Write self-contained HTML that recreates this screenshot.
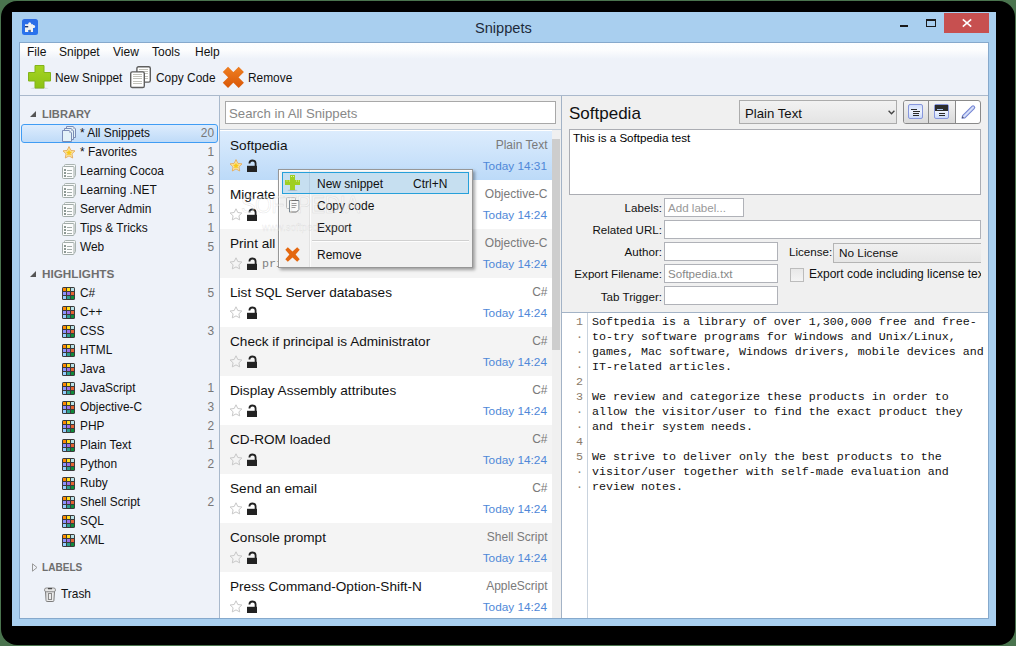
<!DOCTYPE html><html><head><meta charset="utf-8"><style>
*{margin:0;padding:0;box-sizing:border-box}
html,body{width:1016px;height:646px;overflow:hidden;background:#4a744e;font-family:"Liberation Sans",sans-serif;color:#111}
.a{position:absolute}
.t{position:absolute;white-space:nowrap;line-height:16px}
svg{position:absolute;overflow:visible}
#shadow{left:1px;top:1px;width:1014px;height:644px;background:#000;border-radius:16px}
#frame{left:12px;top:12px;width:984px;height:614px;background:#a9cfef}
#client{left:19px;top:42px;width:970px;height:577px;border:1px solid #86a9cc;background:#eef2f9}
#menubar{left:20px;top:43px;width:968px;height:52px;background:linear-gradient(#fdfeff 0px,#fcfdfe 7px,#eef2f9 16px,#eef2f9 52px)}
.menu{font-size:12px;top:44px}
.tb{font-size:11.9px;top:70px}
.hdr{font-size:11.4px;font-weight:bold;color:#6e6e6e;left:42px}
.row{font-size:11.9px;left:80px}
.cnt{font-size:11.9px;color:#777;left:0;width:214px;text-align:right}
.ttl{font-size:13.6px;left:230px;color:#111}
.typ{font-size:12px;color:#7a7a7a;left:300px;width:247.5px;text-align:right}
.dt{font-size:11.8px;color:#4f88d8;left:300px;width:247px;text-align:right}
.lbl{font-size:11.6px;left:500px;width:162px;text-align:right;color:#111}
.inp{position:absolute;background:#fff;border:1px solid #b0b2b8}
.code{font-family:"Liberation Mono",monospace;font-size:11.67px;line-height:15px;color:#111;white-space:pre}
.ln{font-family:"Liberation Mono",monospace;font-size:11.67px;line-height:15px;color:#8a7a6a;white-space:pre;text-align:right}
.mi{font-size:12px;left:317px}
</style></head><body>
<div id="shadow" class="a"></div><div id="frame" class="a"></div>
<svg style="left:22px;top:19px" width="16" height="16" viewBox="0 0 16 16">
<defs><linearGradient id="gb" x1="0" y1="0" x2="0" y2="1"><stop offset="0" stop-color="#2c6ce6"/><stop offset="1" stop-color="#2a74ee"/></linearGradient></defs>
<rect x="0" y="0" width="16" height="16" rx="2.5" fill="url(#gb)"/>
<path d="M3 5.3h3.2v-0.6a1.5 1.5 0 1 1 3 0v0.6h1.8v0.6h0.6a1.6 1.6 0 1 1 0 3.2h-0.6v4h-3.6v-2.2h-1.2v2.2h-3.2z" fill="#f2f2f2"/>
<rect x="3" y="7" width="3.2" height="1.4" fill="#243a70"/>
<rect x="7.4" y="10.8" width="1.2" height="2.3" fill="#1e3466"/>
</svg>
<div class="t" style="left:475px;top:19px;font-size:14.6px;line-height:18px;color:#1d2a3a">Snippets</div>
<div class="a" style="left:900px;top:25px;width:8px;height:2px;background:#1a1a1a"></div>
<div class="a" style="left:926px;top:19px;width:10px;height:8px;border:1px solid #1a1a1a;border-top-width:2px"></div>
<div class="a" style="left:944px;top:13px;width:45px;height:20px;background:#c75050"></div>
<svg style="left:962px;top:19px" width="10" height="8" viewBox="0 0 10 8"><path d="M0.8 0.4L9.2 7.6M9.2 0.4L0.8 7.6" stroke="#fff" stroke-width="1.6"/></svg>
<div id="client" class="a"></div><div id="menubar" class="a"></div>
<div class="t menu" style="left:27px">File</div>
<div class="t menu" style="left:59px">Snippet</div>
<div class="t menu" style="left:113px">View</div>
<div class="t menu" style="left:152px">Tools</div>
<div class="t menu" style="left:195px">Help</div>
<svg style="left:28px;top:65px" width="23" height="24" viewBox="0 0 23 24">
<defs><linearGradient id="gp" x1="0" y1="0" x2="0" y2="1"><stop offset="0" stop-color="#a6d422"/><stop offset="1" stop-color="#8cc214"/></linearGradient></defs>
<ellipse cx="11.5" cy="23.2" rx="9" ry="0.8" fill="#000" opacity="0.12"/>
<path d="M7 0.5h9v7h6.5v8.5h-6.5v7h-9v-7h-6.5v-8.5h6.5z" fill="url(#gp)" stroke="#82b41a" stroke-width="1"/>
</svg>
<svg style="left:130px;top:66px" width="22" height="23" viewBox="0 0 22 23">
<rect x="6.9" y="0.7" width="13.4" height="15.4" rx="1.6" fill="#fff" stroke="#5e5e5e" stroke-width="1.4"/>
<path d="M9 3.5h9M9 5.5h9M9 7.5h9M9 10.5h9M9 12.5h9" stroke="#c2c2ba" stroke-width="1"/>
<rect x="0.7" y="5.9" width="13.6" height="15.6" rx="1.6" fill="#fff" stroke="#5e5e5e" stroke-width="1.4"/>
<path d="M3 8.5h9M3 10.5h9M3 12.5h9M3 15.5h9M3 17.5h9" stroke="#c2c2ba" stroke-width="1"/>
</svg>
<svg style="left:222px;top:66px" width="23" height="22" viewBox="0 0 23 22">
<defs><linearGradient id="gx" x1="0" y1="0" x2="0" y2="1"><stop offset="0" stop-color="#ec7a1e"/><stop offset="1" stop-color="#dc5c0a"/></linearGradient></defs><path d="M3.4 3.4L19.3 19.3M19.3 3.4L3.4 19.3" stroke="url(#gx)" stroke-width="7.4" stroke-linecap="butt"/>
</svg>
<div class="t tb" style="left:55px">New Snippet</div>
<div class="t tb" style="left:156px">Copy Code</div>
<div class="t tb" style="left:248px">Remove</div>
<div class="a" style="left:20px;top:95px;width:968px;height:1px;background:#aab9cc"></div>
<div class="a" style="left:20px;top:96px;width:199px;height:522px;background:#eef2f9"></div>
<div class="a" style="left:219px;top:96px;width:1px;height:522px;background:#a9b9cc"></div>
<svg style="left:29px;top:110px" width="8" height="8" viewBox="0 0 8 8"><path d="M7 1V7H1z" fill="#555"/></svg>
<div class="t hdr" style="top:106px;transform:scaleX(0.975);transform-origin:0 0">LIBRARY</div>
<div class="a" style="left:21px;top:124px;width:197px;height:19px;border:1px solid #3f9cf4;border-radius:3px;background:linear-gradient(#ddecfd,#bfdbf8)"></div>
<svg style="left:62px;top:125px" width="16" height="17" viewBox="0 0 16 17"><path d="M4.5 1.5h7l2 2v9h-9z" fill="#e4f2f8" stroke="#7a8cb6"/><path d="M11.5 1.5v2h2z" fill="#fff" stroke="#aab6d0"/><path d="M2.5 3.5h7l2 2v9h-9z" fill="#e4f2f8" stroke="#7a8cb6"/><path d="M9.5 3.5v2h2z" fill="#fff" stroke="#aab6d0"/><path d="M0.5 5.5h7l2 2v9h-9z" fill="#e4f2f8" stroke="#7a8cb6"/><path d="M7.5 5.5v2h2z" fill="#fff" stroke="#aab6d0"/></svg>
<div class="t row" style="top:125px">* All Snippets</div>
<div class="t cnt" style="top:125px">20</div>
<svg style="left:62px;top:146px" width="14" height="13" viewBox="0 0 14 13">
<path d="M7 0.6L8.8 4.4L13 4.9L9.9 7.8L10.7 12L7 9.9L3.3 12L4.1 7.8L1 4.9L5.2 4.4z" fill="#fde9a8" stroke="#e6b064" stroke-width="1" stroke-linejoin="round"/>
<path d="M7 3.2L7.9 5.5L10.3 5.8L8.5 7.4L9 9.6L7 8.4L5 9.6L5.5 7.4L3.7 5.8L6.1 5.5z" fill="#f8c81a"/>
</svg>
<div class="t row" style="top:144px">* Favorites</div>
<div class="t cnt" style="top:144px">1</div>
<svg style="left:62px;top:164px" width="15" height="15" viewBox="0 0 15 15">
<rect x="2.5" y="0.5" width="11" height="12" rx="1" fill="#f6f8f8" stroke="#a9b3b0"/>
<rect x="0.5" y="2.5" width="11.5" height="12" rx="1" fill="#fbfcfc" stroke="#a2aca9"/>
<path d="M2 6h2M2 9h2M2 12h2" stroke="#8c9894" stroke-width="1.8"/>
<path d="M5 6.5h5M5 9.5h5M5 12.5h5" stroke="#a3adaa" stroke-width="1.2"/>
</svg>
<div class="t row" style="top:163px">Learning Cocoa</div>
<div class="t cnt" style="top:163px">3</div>
<svg style="left:62px;top:183px" width="15" height="15" viewBox="0 0 15 15">
<rect x="2.5" y="0.5" width="11" height="12" rx="1" fill="#f6f8f8" stroke="#a9b3b0"/>
<rect x="0.5" y="2.5" width="11.5" height="12" rx="1" fill="#fbfcfc" stroke="#a2aca9"/>
<path d="M2 6h2M2 9h2M2 12h2" stroke="#8c9894" stroke-width="1.8"/>
<path d="M5 6.5h5M5 9.5h5M5 12.5h5" stroke="#a3adaa" stroke-width="1.2"/>
</svg>
<div class="t row" style="top:182px">Learning .NET</div>
<div class="t cnt" style="top:182px">5</div>
<svg style="left:62px;top:202px" width="15" height="15" viewBox="0 0 15 15">
<rect x="2.5" y="0.5" width="11" height="12" rx="1" fill="#f6f8f8" stroke="#a9b3b0"/>
<rect x="0.5" y="2.5" width="11.5" height="12" rx="1" fill="#fbfcfc" stroke="#a2aca9"/>
<path d="M2 6h2M2 9h2M2 12h2" stroke="#8c9894" stroke-width="1.8"/>
<path d="M5 6.5h5M5 9.5h5M5 12.5h5" stroke="#a3adaa" stroke-width="1.2"/>
</svg>
<div class="t row" style="top:201px">Server Admin</div>
<div class="t cnt" style="top:201px">1</div>
<svg style="left:62px;top:221px" width="15" height="15" viewBox="0 0 15 15">
<rect x="2.5" y="0.5" width="11" height="12" rx="1" fill="#f6f8f8" stroke="#a9b3b0"/>
<rect x="0.5" y="2.5" width="11.5" height="12" rx="1" fill="#fbfcfc" stroke="#a2aca9"/>
<path d="M2 6h2M2 9h2M2 12h2" stroke="#8c9894" stroke-width="1.8"/>
<path d="M5 6.5h5M5 9.5h5M5 12.5h5" stroke="#a3adaa" stroke-width="1.2"/>
</svg>
<div class="t row" style="top:220px">Tips &amp; Tricks</div>
<div class="t cnt" style="top:220px">1</div>
<svg style="left:62px;top:240px" width="15" height="15" viewBox="0 0 15 15">
<rect x="2.5" y="0.5" width="11" height="12" rx="1" fill="#f6f8f8" stroke="#a9b3b0"/>
<rect x="0.5" y="2.5" width="11.5" height="12" rx="1" fill="#fbfcfc" stroke="#a2aca9"/>
<path d="M2 6h2M2 9h2M2 12h2" stroke="#8c9894" stroke-width="1.8"/>
<path d="M5 6.5h5M5 9.5h5M5 12.5h5" stroke="#a3adaa" stroke-width="1.2"/>
</svg>
<div class="t row" style="top:239px">Web</div>
<div class="t cnt" style="top:239px">5</div>
<svg style="left:29px;top:270px" width="8" height="8" viewBox="0 0 8 8"><path d="M7 1V7H1z" fill="#555"/></svg>
<div class="t hdr" style="top:266px;transform:scaleX(1.03);transform-origin:0 0">HIGHLIGHTS</div>
<svg style="left:62px;top:287px" width="13" height="13" viewBox="0 0 13 13"><rect x="0" y="0" width="13" height="13" rx="1.5" fill="#3a3a3a"/><rect x="1" y="1" width="3" height="3" fill="#ff8a00"/><rect x="5" y="1" width="3" height="3" fill="#ffe01e"/><rect x="9" y="1" width="3" height="3" fill="#b8e2e8"/><rect x="1" y="5" width="3" height="3" fill="#8c92ff"/><rect x="5" y="5" width="3" height="3" fill="#9a6ee6"/><rect x="9" y="5" width="3" height="3" fill="#e66232"/><rect x="1" y="9" width="3" height="3" fill="#94ccff"/><rect x="5" y="9" width="3" height="3" fill="#2e9e8c"/><rect x="9" y="9" width="3" height="3" fill="#0e8a3a"/></svg>
<div class="t row" style="top:285px">C#</div>
<div class="t cnt" style="top:285px">5</div>
<svg style="left:62px;top:306px" width="13" height="13" viewBox="0 0 13 13"><rect x="0" y="0" width="13" height="13" rx="1.5" fill="#3a3a3a"/><rect x="1" y="1" width="3" height="3" fill="#ff8a00"/><rect x="5" y="1" width="3" height="3" fill="#ffe01e"/><rect x="9" y="1" width="3" height="3" fill="#b8e2e8"/><rect x="1" y="5" width="3" height="3" fill="#8c92ff"/><rect x="5" y="5" width="3" height="3" fill="#9a6ee6"/><rect x="9" y="5" width="3" height="3" fill="#e66232"/><rect x="1" y="9" width="3" height="3" fill="#94ccff"/><rect x="5" y="9" width="3" height="3" fill="#2e9e8c"/><rect x="9" y="9" width="3" height="3" fill="#0e8a3a"/></svg>
<div class="t row" style="top:304px">C++</div>
<svg style="left:62px;top:325px" width="13" height="13" viewBox="0 0 13 13"><rect x="0" y="0" width="13" height="13" rx="1.5" fill="#3a3a3a"/><rect x="1" y="1" width="3" height="3" fill="#ff8a00"/><rect x="5" y="1" width="3" height="3" fill="#ffe01e"/><rect x="9" y="1" width="3" height="3" fill="#b8e2e8"/><rect x="1" y="5" width="3" height="3" fill="#8c92ff"/><rect x="5" y="5" width="3" height="3" fill="#9a6ee6"/><rect x="9" y="5" width="3" height="3" fill="#e66232"/><rect x="1" y="9" width="3" height="3" fill="#94ccff"/><rect x="5" y="9" width="3" height="3" fill="#2e9e8c"/><rect x="9" y="9" width="3" height="3" fill="#0e8a3a"/></svg>
<div class="t row" style="top:323px">CSS</div>
<div class="t cnt" style="top:323px">3</div>
<svg style="left:62px;top:344px" width="13" height="13" viewBox="0 0 13 13"><rect x="0" y="0" width="13" height="13" rx="1.5" fill="#3a3a3a"/><rect x="1" y="1" width="3" height="3" fill="#ff8a00"/><rect x="5" y="1" width="3" height="3" fill="#ffe01e"/><rect x="9" y="1" width="3" height="3" fill="#b8e2e8"/><rect x="1" y="5" width="3" height="3" fill="#8c92ff"/><rect x="5" y="5" width="3" height="3" fill="#9a6ee6"/><rect x="9" y="5" width="3" height="3" fill="#e66232"/><rect x="1" y="9" width="3" height="3" fill="#94ccff"/><rect x="5" y="9" width="3" height="3" fill="#2e9e8c"/><rect x="9" y="9" width="3" height="3" fill="#0e8a3a"/></svg>
<div class="t row" style="top:342px">HTML</div>
<svg style="left:62px;top:363px" width="13" height="13" viewBox="0 0 13 13"><rect x="0" y="0" width="13" height="13" rx="1.5" fill="#3a3a3a"/><rect x="1" y="1" width="3" height="3" fill="#ff8a00"/><rect x="5" y="1" width="3" height="3" fill="#ffe01e"/><rect x="9" y="1" width="3" height="3" fill="#b8e2e8"/><rect x="1" y="5" width="3" height="3" fill="#8c92ff"/><rect x="5" y="5" width="3" height="3" fill="#9a6ee6"/><rect x="9" y="5" width="3" height="3" fill="#e66232"/><rect x="1" y="9" width="3" height="3" fill="#94ccff"/><rect x="5" y="9" width="3" height="3" fill="#2e9e8c"/><rect x="9" y="9" width="3" height="3" fill="#0e8a3a"/></svg>
<div class="t row" style="top:361px">Java</div>
<svg style="left:62px;top:382px" width="13" height="13" viewBox="0 0 13 13"><rect x="0" y="0" width="13" height="13" rx="1.5" fill="#3a3a3a"/><rect x="1" y="1" width="3" height="3" fill="#ff8a00"/><rect x="5" y="1" width="3" height="3" fill="#ffe01e"/><rect x="9" y="1" width="3" height="3" fill="#b8e2e8"/><rect x="1" y="5" width="3" height="3" fill="#8c92ff"/><rect x="5" y="5" width="3" height="3" fill="#9a6ee6"/><rect x="9" y="5" width="3" height="3" fill="#e66232"/><rect x="1" y="9" width="3" height="3" fill="#94ccff"/><rect x="5" y="9" width="3" height="3" fill="#2e9e8c"/><rect x="9" y="9" width="3" height="3" fill="#0e8a3a"/></svg>
<div class="t row" style="top:380px">JavaScript</div>
<div class="t cnt" style="top:380px">1</div>
<svg style="left:62px;top:401px" width="13" height="13" viewBox="0 0 13 13"><rect x="0" y="0" width="13" height="13" rx="1.5" fill="#3a3a3a"/><rect x="1" y="1" width="3" height="3" fill="#ff8a00"/><rect x="5" y="1" width="3" height="3" fill="#ffe01e"/><rect x="9" y="1" width="3" height="3" fill="#b8e2e8"/><rect x="1" y="5" width="3" height="3" fill="#8c92ff"/><rect x="5" y="5" width="3" height="3" fill="#9a6ee6"/><rect x="9" y="5" width="3" height="3" fill="#e66232"/><rect x="1" y="9" width="3" height="3" fill="#94ccff"/><rect x="5" y="9" width="3" height="3" fill="#2e9e8c"/><rect x="9" y="9" width="3" height="3" fill="#0e8a3a"/></svg>
<div class="t row" style="top:399px">Objective-C</div>
<div class="t cnt" style="top:399px">3</div>
<svg style="left:62px;top:420px" width="13" height="13" viewBox="0 0 13 13"><rect x="0" y="0" width="13" height="13" rx="1.5" fill="#3a3a3a"/><rect x="1" y="1" width="3" height="3" fill="#ff8a00"/><rect x="5" y="1" width="3" height="3" fill="#ffe01e"/><rect x="9" y="1" width="3" height="3" fill="#b8e2e8"/><rect x="1" y="5" width="3" height="3" fill="#8c92ff"/><rect x="5" y="5" width="3" height="3" fill="#9a6ee6"/><rect x="9" y="5" width="3" height="3" fill="#e66232"/><rect x="1" y="9" width="3" height="3" fill="#94ccff"/><rect x="5" y="9" width="3" height="3" fill="#2e9e8c"/><rect x="9" y="9" width="3" height="3" fill="#0e8a3a"/></svg>
<div class="t row" style="top:418px">PHP</div>
<div class="t cnt" style="top:418px">2</div>
<svg style="left:62px;top:439px" width="13" height="13" viewBox="0 0 13 13"><rect x="0" y="0" width="13" height="13" rx="1.5" fill="#3a3a3a"/><rect x="1" y="1" width="3" height="3" fill="#ff8a00"/><rect x="5" y="1" width="3" height="3" fill="#ffe01e"/><rect x="9" y="1" width="3" height="3" fill="#b8e2e8"/><rect x="1" y="5" width="3" height="3" fill="#8c92ff"/><rect x="5" y="5" width="3" height="3" fill="#9a6ee6"/><rect x="9" y="5" width="3" height="3" fill="#e66232"/><rect x="1" y="9" width="3" height="3" fill="#94ccff"/><rect x="5" y="9" width="3" height="3" fill="#2e9e8c"/><rect x="9" y="9" width="3" height="3" fill="#0e8a3a"/></svg>
<div class="t row" style="top:437px">Plain Text</div>
<div class="t cnt" style="top:437px">1</div>
<svg style="left:62px;top:458px" width="13" height="13" viewBox="0 0 13 13"><rect x="0" y="0" width="13" height="13" rx="1.5" fill="#3a3a3a"/><rect x="1" y="1" width="3" height="3" fill="#ff8a00"/><rect x="5" y="1" width="3" height="3" fill="#ffe01e"/><rect x="9" y="1" width="3" height="3" fill="#b8e2e8"/><rect x="1" y="5" width="3" height="3" fill="#8c92ff"/><rect x="5" y="5" width="3" height="3" fill="#9a6ee6"/><rect x="9" y="5" width="3" height="3" fill="#e66232"/><rect x="1" y="9" width="3" height="3" fill="#94ccff"/><rect x="5" y="9" width="3" height="3" fill="#2e9e8c"/><rect x="9" y="9" width="3" height="3" fill="#0e8a3a"/></svg>
<div class="t row" style="top:456px">Python</div>
<div class="t cnt" style="top:456px">2</div>
<svg style="left:62px;top:477px" width="13" height="13" viewBox="0 0 13 13"><rect x="0" y="0" width="13" height="13" rx="1.5" fill="#3a3a3a"/><rect x="1" y="1" width="3" height="3" fill="#ff8a00"/><rect x="5" y="1" width="3" height="3" fill="#ffe01e"/><rect x="9" y="1" width="3" height="3" fill="#b8e2e8"/><rect x="1" y="5" width="3" height="3" fill="#8c92ff"/><rect x="5" y="5" width="3" height="3" fill="#9a6ee6"/><rect x="9" y="5" width="3" height="3" fill="#e66232"/><rect x="1" y="9" width="3" height="3" fill="#94ccff"/><rect x="5" y="9" width="3" height="3" fill="#2e9e8c"/><rect x="9" y="9" width="3" height="3" fill="#0e8a3a"/></svg>
<div class="t row" style="top:475px">Ruby</div>
<svg style="left:62px;top:496px" width="13" height="13" viewBox="0 0 13 13"><rect x="0" y="0" width="13" height="13" rx="1.5" fill="#3a3a3a"/><rect x="1" y="1" width="3" height="3" fill="#ff8a00"/><rect x="5" y="1" width="3" height="3" fill="#ffe01e"/><rect x="9" y="1" width="3" height="3" fill="#b8e2e8"/><rect x="1" y="5" width="3" height="3" fill="#8c92ff"/><rect x="5" y="5" width="3" height="3" fill="#9a6ee6"/><rect x="9" y="5" width="3" height="3" fill="#e66232"/><rect x="1" y="9" width="3" height="3" fill="#94ccff"/><rect x="5" y="9" width="3" height="3" fill="#2e9e8c"/><rect x="9" y="9" width="3" height="3" fill="#0e8a3a"/></svg>
<div class="t row" style="top:494px">Shell Script</div>
<div class="t cnt" style="top:494px">2</div>
<svg style="left:62px;top:515px" width="13" height="13" viewBox="0 0 13 13"><rect x="0" y="0" width="13" height="13" rx="1.5" fill="#3a3a3a"/><rect x="1" y="1" width="3" height="3" fill="#ff8a00"/><rect x="5" y="1" width="3" height="3" fill="#ffe01e"/><rect x="9" y="1" width="3" height="3" fill="#b8e2e8"/><rect x="1" y="5" width="3" height="3" fill="#8c92ff"/><rect x="5" y="5" width="3" height="3" fill="#9a6ee6"/><rect x="9" y="5" width="3" height="3" fill="#e66232"/><rect x="1" y="9" width="3" height="3" fill="#94ccff"/><rect x="5" y="9" width="3" height="3" fill="#2e9e8c"/><rect x="9" y="9" width="3" height="3" fill="#0e8a3a"/></svg>
<div class="t row" style="top:513px">SQL</div>
<svg style="left:62px;top:534px" width="13" height="13" viewBox="0 0 13 13"><rect x="0" y="0" width="13" height="13" rx="1.5" fill="#3a3a3a"/><rect x="1" y="1" width="3" height="3" fill="#ff8a00"/><rect x="5" y="1" width="3" height="3" fill="#ffe01e"/><rect x="9" y="1" width="3" height="3" fill="#b8e2e8"/><rect x="1" y="5" width="3" height="3" fill="#8c92ff"/><rect x="5" y="5" width="3" height="3" fill="#9a6ee6"/><rect x="9" y="5" width="3" height="3" fill="#e66232"/><rect x="1" y="9" width="3" height="3" fill="#94ccff"/><rect x="5" y="9" width="3" height="3" fill="#2e9e8c"/><rect x="9" y="9" width="3" height="3" fill="#0e8a3a"/></svg>
<div class="t row" style="top:532px">XML</div>
<svg style="left:32px;top:563px" width="6" height="9" viewBox="0 0 6 9"><path d="M0.5 0.8L5 4.5L0.5 8.2z" fill="none" stroke="#999" stroke-width="1"/></svg>
<div class="t hdr" style="top:559px;transform:scaleX(0.885);transform-origin:0 0">LABELS</div>
<svg style="left:44px;top:587px" width="12" height="15" viewBox="0 0 12 15">
<path d="M1.5 4.5h9l-0.6 9a1 1 0 0 1 -1 1h-5.8a1 1 0 0 1 -1 -1z" fill="#ececec" stroke="#7c7c7c"/>
<path d="M2.8 5.5v8" stroke="#c8c8c8"/>
<rect x="4.5" y="6.5" width="3" height="6" fill="none" stroke="#8a8a8a"/>
<rect x="0.5" y="1" width="11" height="3.8" rx="1.8" fill="#e6e6e6" stroke="#8e8e8e"/>
<path d="M4 1.6h4" stroke="#4a4a4a" stroke-width="1.3"/>
</svg>
<div class="t row" style="top:586px;left:61px">Trash</div>
<div class="a" style="left:220px;top:96px;width:342px;height:522px;background:#f0f0f0"></div>
<div class="inp" style="left:225px;top:101px;width:331px;height:23px;border-color:#a8a8a8"></div>
<div class="t" style="left:229px;top:106px;font-size:13.2px;color:#888">Search in All Snippets</div>
<div class="a" style="left:220px;top:129px;width:342px;height:1px;background:#c2cbd6"></div>
<div class="a" style="left:220px;top:130px;width:332px;height:488px;background:#fff;overflow:hidden"></div>
<div class="a" style="left:220px;top:131px;width:332px;height:49px;background:linear-gradient(#dcecfd,#bcdaf8)"></div>
<div class="t ttl" style="top:137.6px">Softpedia</div>
<div class="t typ" style="top:137px">Plain Text</div>
<div class="t dt" style="top:157.6px">Today 14:31</div>
<svg style="left:229px;top:159px" width="14" height="13" viewBox="0 0 14 13">
<path d="M7 0.6L8.8 4.4L13 4.9L9.9 7.8L10.7 12L7 9.9L3.3 12L4.1 7.8L1 4.9L5.2 4.4z" fill="#fde9a8" stroke="#e6b064" stroke-width="1" stroke-linejoin="round"/>
<path d="M7 3.2L7.9 5.5L10.3 5.8L8.5 7.4L9 9.6L7 8.4L5 9.6L5.5 7.4L3.7 5.8L6.1 5.5z" fill="#f8c81a"/>
</svg>
<svg style="left:247px;top:159px" width="11" height="14" viewBox="0 0 11 14">
<path d="M2.4 4.6A3.1 3.1 0 0 1 8.6 4.6V7" fill="none" stroke="#222" stroke-width="1.8"/>
<rect x="0" y="6.8" width="10" height="6.2" fill="#222"/></svg>
<div class="a" style="left:220px;top:180px;width:332px;height:49px;background:#ffffff"></div>
<div class="t ttl" style="top:186.6px">Migrate Projects</div>
<div class="t typ" style="top:186px">Objective-C</div>
<div class="t dt" style="top:206.6px">Today 14:24</div>
<svg style="left:229px;top:208px" width="14" height="13" viewBox="0 0 14 13">
<path d="M7 0.8L8.8 4.5L12.9 5L9.9 7.8L10.7 11.9L7 9.9L3.3 11.9L4.1 7.8L1.1 5L5.2 4.5z" fill="none" stroke="#c8c8c8" stroke-width="1" stroke-linejoin="round"/>
</svg>
<svg style="left:247px;top:208px" width="11" height="14" viewBox="0 0 11 14">
<path d="M2.4 4.6A3.1 3.1 0 0 1 8.6 4.6V7" fill="none" stroke="#222" stroke-width="1.8"/>
<rect x="0" y="6.8" width="10" height="6.2" fill="#222"/></svg>
<div class="a" style="left:220px;top:229px;width:332px;height:49px;background:#f4f4f4"></div>
<div class="t ttl" style="top:235.6px">Print all</div>
<div class="t typ" style="top:235px">Objective-C</div>
<div class="t dt" style="top:255.6px">Today 14:24</div>
<svg style="left:229px;top:257px" width="14" height="13" viewBox="0 0 14 13">
<path d="M7 0.8L8.8 4.5L12.9 5L9.9 7.8L10.7 11.9L7 9.9L3.3 11.9L4.1 7.8L1.1 5L5.2 4.5z" fill="none" stroke="#c8c8c8" stroke-width="1" stroke-linejoin="round"/>
</svg>
<svg style="left:247px;top:257px" width="11" height="14" viewBox="0 0 11 14">
<path d="M2.4 4.6A3.1 3.1 0 0 1 8.6 4.6V7" fill="none" stroke="#222" stroke-width="1.8"/>
<rect x="0" y="6.8" width="10" height="6.2" fill="#222"/></svg>
<div class="a" style="left:220px;top:278px;width:332px;height:49px;background:#ffffff"></div>
<div class="t ttl" style="top:284.6px">List SQL Server databases</div>
<div class="t typ" style="top:284px">C#</div>
<div class="t dt" style="top:304.6px">Today 14:24</div>
<svg style="left:229px;top:306px" width="14" height="13" viewBox="0 0 14 13">
<path d="M7 0.8L8.8 4.5L12.9 5L9.9 7.8L10.7 11.9L7 9.9L3.3 11.9L4.1 7.8L1.1 5L5.2 4.5z" fill="none" stroke="#c8c8c8" stroke-width="1" stroke-linejoin="round"/>
</svg>
<svg style="left:247px;top:306px" width="11" height="14" viewBox="0 0 11 14">
<path d="M2.4 4.6A3.1 3.1 0 0 1 8.6 4.6V7" fill="none" stroke="#222" stroke-width="1.8"/>
<rect x="0" y="6.8" width="10" height="6.2" fill="#222"/></svg>
<div class="a" style="left:220px;top:327px;width:332px;height:49px;background:#f4f4f4"></div>
<div class="t ttl" style="top:333.6px">Check if principal is Administrator</div>
<div class="t typ" style="top:333px">C#</div>
<div class="t dt" style="top:353.6px">Today 14:24</div>
<svg style="left:229px;top:355px" width="14" height="13" viewBox="0 0 14 13">
<path d="M7 0.8L8.8 4.5L12.9 5L9.9 7.8L10.7 11.9L7 9.9L3.3 11.9L4.1 7.8L1.1 5L5.2 4.5z" fill="none" stroke="#c8c8c8" stroke-width="1" stroke-linejoin="round"/>
</svg>
<svg style="left:247px;top:355px" width="11" height="14" viewBox="0 0 11 14">
<path d="M2.4 4.6A3.1 3.1 0 0 1 8.6 4.6V7" fill="none" stroke="#222" stroke-width="1.8"/>
<rect x="0" y="6.8" width="10" height="6.2" fill="#222"/></svg>
<div class="a" style="left:220px;top:376px;width:332px;height:49px;background:#ffffff"></div>
<div class="t ttl" style="top:382.6px">Display Assembly attributes</div>
<div class="t typ" style="top:382px">C#</div>
<div class="t dt" style="top:402.6px">Today 14:24</div>
<svg style="left:229px;top:404px" width="14" height="13" viewBox="0 0 14 13">
<path d="M7 0.8L8.8 4.5L12.9 5L9.9 7.8L10.7 11.9L7 9.9L3.3 11.9L4.1 7.8L1.1 5L5.2 4.5z" fill="none" stroke="#c8c8c8" stroke-width="1" stroke-linejoin="round"/>
</svg>
<svg style="left:247px;top:404px" width="11" height="14" viewBox="0 0 11 14">
<path d="M2.4 4.6A3.1 3.1 0 0 1 8.6 4.6V7" fill="none" stroke="#222" stroke-width="1.8"/>
<rect x="0" y="6.8" width="10" height="6.2" fill="#222"/></svg>
<div class="a" style="left:220px;top:425px;width:332px;height:49px;background:#f4f4f4"></div>
<div class="t ttl" style="top:431.6px">CD-ROM loaded</div>
<div class="t typ" style="top:431px">C#</div>
<div class="t dt" style="top:451.6px">Today 14:24</div>
<svg style="left:229px;top:453px" width="14" height="13" viewBox="0 0 14 13">
<path d="M7 0.8L8.8 4.5L12.9 5L9.9 7.8L10.7 11.9L7 9.9L3.3 11.9L4.1 7.8L1.1 5L5.2 4.5z" fill="none" stroke="#c8c8c8" stroke-width="1" stroke-linejoin="round"/>
</svg>
<svg style="left:247px;top:453px" width="11" height="14" viewBox="0 0 11 14">
<path d="M2.4 4.6A3.1 3.1 0 0 1 8.6 4.6V7" fill="none" stroke="#222" stroke-width="1.8"/>
<rect x="0" y="6.8" width="10" height="6.2" fill="#222"/></svg>
<div class="a" style="left:220px;top:474px;width:332px;height:49px;background:#ffffff"></div>
<div class="t ttl" style="top:480.6px">Send an email</div>
<div class="t typ" style="top:480px">C#</div>
<div class="t dt" style="top:500.6px">Today 14:24</div>
<svg style="left:229px;top:502px" width="14" height="13" viewBox="0 0 14 13">
<path d="M7 0.8L8.8 4.5L12.9 5L9.9 7.8L10.7 11.9L7 9.9L3.3 11.9L4.1 7.8L1.1 5L5.2 4.5z" fill="none" stroke="#c8c8c8" stroke-width="1" stroke-linejoin="round"/>
</svg>
<svg style="left:247px;top:502px" width="11" height="14" viewBox="0 0 11 14">
<path d="M2.4 4.6A3.1 3.1 0 0 1 8.6 4.6V7" fill="none" stroke="#222" stroke-width="1.8"/>
<rect x="0" y="6.8" width="10" height="6.2" fill="#222"/></svg>
<div class="a" style="left:220px;top:523px;width:332px;height:49px;background:#f4f4f4"></div>
<div class="t ttl" style="top:529.6px">Console prompt</div>
<div class="t typ" style="top:529px">Shell Script</div>
<div class="t dt" style="top:549.6px">Today 14:24</div>
<svg style="left:229px;top:551px" width="14" height="13" viewBox="0 0 14 13">
<path d="M7 0.8L8.8 4.5L12.9 5L9.9 7.8L10.7 11.9L7 9.9L3.3 11.9L4.1 7.8L1.1 5L5.2 4.5z" fill="none" stroke="#c8c8c8" stroke-width="1" stroke-linejoin="round"/>
</svg>
<svg style="left:247px;top:551px" width="11" height="14" viewBox="0 0 11 14">
<path d="M2.4 4.6A3.1 3.1 0 0 1 8.6 4.6V7" fill="none" stroke="#222" stroke-width="1.8"/>
<rect x="0" y="6.8" width="10" height="6.2" fill="#222"/></svg>
<div class="a" style="left:220px;top:572px;width:332px;height:46px;background:#ffffff"></div>
<div class="t ttl" style="top:578.6px">Press Command-Option-Shift-N</div>
<div class="t typ" style="top:578px">AppleScript</div>
<div class="t dt" style="top:598.6px">Today 14:24</div>
<svg style="left:229px;top:600px" width="14" height="13" viewBox="0 0 14 13">
<path d="M7 0.8L8.8 4.5L12.9 5L9.9 7.8L10.7 11.9L7 9.9L3.3 11.9L4.1 7.8L1.1 5L5.2 4.5z" fill="none" stroke="#c8c8c8" stroke-width="1" stroke-linejoin="round"/>
</svg>
<svg style="left:247px;top:600px" width="11" height="14" viewBox="0 0 11 14">
<path d="M2.4 4.6A3.1 3.1 0 0 1 8.6 4.6V7" fill="none" stroke="#222" stroke-width="1.8"/>
<rect x="0" y="6.8" width="10" height="6.2" fill="#222"/></svg>
<div class="t code" style="left:262px;top:257px;color:#808080;font-size:11.67px">pri</div>
<div class="a" style="left:552px;top:130px;width:9px;height:488px;background:#f0f0f0"></div>
<div class="a" style="left:552px;top:139px;width:8px;height:211px;background:#cdcdcd"></div>
<div class="a" style="left:561px;top:96px;width:1px;height:522px;background:#a3b3c6"></div>
<div class="a" style="left:562px;top:96px;width:426px;height:522px;background:#f0f0f0"></div>
<div class="t" style="left:569px;top:103.5px;font-size:17px;line-height:20px;color:#111">Softpedia</div>
<div class="a" style="left:739px;top:100px;width:158px;height:24px;border:1px solid #acacac;background:linear-gradient(#f2f2f2,#e4e4e4)"></div>
<div class="t" style="left:745px;top:105.6px;font-size:13.2px;color:#111">Plain Text</div>
<svg style="left:888px;top:110px" width="7" height="5" viewBox="0 0 7 5"><path d="M0.6 0.8L3.5 3.8L6.4 0.8" fill="none" stroke="#444" stroke-width="1.3"/></svg>
<div class="a" style="left:903px;top:100px;width:78px;height:24px;border:1px solid #8a8a8a;border-radius:3px;background:#fff;overflow:hidden"><div class="a" style="left:0;top:0;width:25px;height:22px;background:linear-gradient(#f3f3f3,#dadada)"></div><div class="a" style="left:24px;top:0;width:1px;height:22px;background:#8a8a8a"></div><div class="a" style="left:25px;top:0;width:26px;height:22px;background:linear-gradient(#f3f3f3,#dadada)"></div><div class="a" style="left:51px;top:0;width:1px;height:22px;background:#8a8a8a"></div></div>
<svg style="left:908px;top:104px" width="15" height="15" viewBox="0 0 15 15">
<defs><linearGradient id="gd" x1="0" y1="0" x2="0" y2="1"><stop offset="0" stop-color="#cfdcfa"/><stop offset="0.5" stop-color="#eef3fe"/><stop offset="1" stop-color="#c6d6f8"/></linearGradient></defs>
<rect x="0.5" y="0.5" width="14" height="14" rx="1.5" fill="url(#gd)" stroke="#8796dc"/>
<path d="M3 5.5h6M5 7.5h7M5 9.5h6M5 11.5h6" stroke="#2a2a2a" stroke-width="1"/></svg>
<svg style="left:934px;top:104px" width="15" height="15" viewBox="0 0 15 15">
<rect x="0.5" y="0.5" width="14" height="14" rx="1.5" fill="url(#gd)" stroke="#8796dc"/>
<rect x="1" y="1" width="13" height="6" fill="#2c2c2c"/>
<path d="M3 5.5h6" stroke="#a8c4f0" stroke-width="1"/>
<path d="M5 9.5h6M5 11.5h6" stroke="#2a2a2a" stroke-width="1"/></svg>
<svg style="left:961px;top:104px" width="15" height="15" viewBox="0 0 15 15">
<path d="M1.6 11.6L10.9 2.3a1.6 1.6 0 0 1 2.3 2.3L3.9 13.9L1 14.2z" fill="#d4def9" stroke="#7686d4" stroke-width="1.1" stroke-linejoin="round"/>
<path d="M1 14.2L1.6 12.2L2.9 13.5z" fill="#444"/></svg>
<div class="inp" style="left:569px;top:129px;width:412px;height:66px;border-color:#abadb3"></div>
<div class="t" style="left:573px;top:130px;font-size:11.6px;color:#000">This is a Softpedia test</div>
<div class="t lbl" style="top:200px">Labels:</div>
<div class="inp" style="left:664px;top:198px;width:80px;height:19px"></div>
<div class="t" style="left:668px;top:200px;font-size:11.6px;color:#999">Add label...</div>
<div class="t lbl" style="top:222px">Related URL:</div>
<div class="inp" style="left:664px;top:220px;width:317px;height:19px"></div>
<div class="t lbl" style="top:244px">Author:</div>
<div class="inp" style="left:664px;top:242px;width:114px;height:19px"></div>
<div class="t" style="left:789px;top:244px;font-size:11.6px;color:#111">License:</div>
<div class="a" style="left:833px;top:243px;width:148px;height:20px;border:1px solid #b4b4b4;border-right:none;background:linear-gradient(#f0f0f0,#e6e6e6)"></div>
<div class="t" style="left:839px;top:245px;font-size:11.8px;color:#111">No License</div>
<div class="t lbl" style="top:266px">Export Filename:</div>
<div class="inp" style="left:664px;top:264px;width:114px;height:19px"></div>
<div class="t" style="left:668px;top:266px;font-size:11.6px;color:#888">Softpedia.txt</div>
<div class="a" style="left:790px;top:268px;width:14px;height:14px;border:1px solid #bcbcbc;background:linear-gradient(#e8e8e8,#f4f4f4)"></div>
<div class="a" style="left:805px;top:262px;width:176px;height:22px;overflow:hidden"><div class="t" style="left:4px;top:4px;font-size:12px;color:#111">Export code including license text</div></div>
<div class="t lbl" style="top:289px">Tab Trigger:</div>
<div class="inp" style="left:664px;top:286px;width:114px;height:19px"></div>
<div class="a" style="left:988px;top:96px;width:8px;height:522px;background:#a9cfef"></div>
<div class="a" style="left:988px;top:42px;width:1px;height:577px;background:#86a9cc"></div>
<div class="a" style="left:562px;top:312px;width:426px;height:1px;background:#a3b3c6"></div>
<div class="a" style="left:562px;top:313px;width:426px;height:305px;background:#fff"></div>
<div class="a" style="left:587px;top:313px;width:1px;height:305px;background:#c9d3de"></div>
<div class="t ln" style="left:562px;top:315px;width:21px">1
·
·
·
2
3
·
·
4
5
·
·</div>
<div class="t code" style="left:592px;top:315px">Softpedia is a library of over 1,300,000 free and free-
to-try software programs for Windows and Unix/Linux,
games, Mac software, Windows drivers, mobile devices and
IT-related articles.

We review and categorize these products in order to
allow the visitor/user to find the exact product they
and their system needs.

We strive to deliver only the best products to the
visitor/user together with self-made evaluation and
review notes.</div>
<div class="a" style="left:278px;top:169px;width:195px;height:99px;border:1px solid #979797;background:#f1f1f1;box-shadow:inset 1px 1px 0 #fcfcfc,2px 2px 3px rgba(0,0,0,0.35)"></div>
<div class="a" style="left:309px;top:170px;width:1px;height:97px;background:#e2e2e2"></div>
<div class="a" style="left:310px;top:170px;width:1px;height:97px;background:#fcfcfc"></div>
<div class="a" style="left:282px;top:172px;width:187px;height:22px;border:1px solid #26a0da;background:#c6dff0"></div>
<div class="a" style="left:309px;top:173px;width:1px;height:20px;background:#b6cfe2"></div>
<div class="a" style="left:312px;top:240px;width:157px;height:1px;background:#d0d0d0"></div>
<div class="a" style="left:312px;top:241px;width:157px;height:1px;background:#fdfdfd"></div>
<svg style="left:285px;top:175px" width="15" height="16" viewBox="0 0 15 16">
<ellipse cx="7.5" cy="15.3" rx="5" ry="0.7" fill="#000" opacity="0.15"/>
<path d="M5 0h5v5h5v5h-5v5h-5v-5h-5v-5h5z" fill="#9ecf22"/>
<path d="M6 1.5h1M8 1.5h1M1.5 6h1M4 6h1M11 6h1M13 6h1" stroke="#dff0a0" stroke-width="1"/>
</svg>
<svg style="left:285px;top:197px" width="16" height="16" viewBox="0 0 16 16">
<rect x="1.5" y="0.5" width="9" height="11" rx="1" fill="#f4f4f4" stroke="#b8b8b8"/>
<path d="M4.5 3.5h9.5v9l-2.5 2.5h-7z" fill="#fafafa" stroke="#6e6e6e" stroke-width="1"/>
<path d="M6.5 6.5h5M6.5 8.5h5M6.5 10.5h4" stroke="#9a9a9a" stroke-width="1"/>
</svg>
<svg style="left:285px;top:247px" width="15" height="15" viewBox="0 0 15 15">
<path d="M2.8 0.3L7.5 4.4L12.2 0.3L14.7 2.8L10.6 7.5L14.7 12.2L12.2 14.7L7.5 10.6L2.8 14.7L0.3 12.2L4.4 7.5L0.3 2.8z" fill="#e4670f"/>
</svg>
<div class="t mi" style="top:176px">New snippet</div>
<div class="t mi" style="top:176px;left:413px">Ctrl+N</div>
<div class="t mi" style="top:198px">Copy code</div>
<div class="t mi" style="top:220px">Export</div>
<div class="t mi" style="top:247px">Remove</div>
<div class="t" style="left:241px;top:192px;font-size:24px;line-height:26px;letter-spacing:-0.5px;color:rgba(255,255,255,0.35);-webkit-text-stroke:0.6px rgba(150,150,150,0.25);transform:scaleX(0.9);transform-origin:0 0">SOFTPEDIA</div>
<div class="t" style="left:262px;top:220px;font-size:11.5px;line-height:14px;color:rgba(255,255,255,0.3);-webkit-text-stroke:0.4px rgba(150,150,150,0.22);transform:scaleX(0.86);transform-origin:0 0">www.softpedia.com</div>
</body></html>
